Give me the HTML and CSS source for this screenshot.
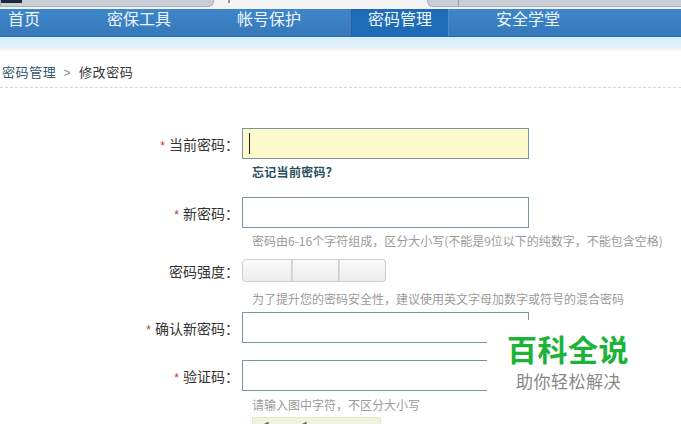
FILE: index.html
```html
<!DOCTYPE html>
<html lang="zh-CN">
<head>
<meta charset="utf-8">
<title>修改密码</title>
<link rel="stylesheet" href="styles.css">
</head>
<body>
<div class="topstrip">
  <div class="tab-left"><span class="tab-dark"></span></div>
  <span class="tick"></span>
  <div class="tab-right"><span class="tab-sep"></span></div>
</div>
<nav class="nav">
  <a class="nav-item first">首页</a>
  <a class="nav-item">密保工具</a>
  <a class="nav-item">帐号保护</a>
  <a class="nav-item active">密码管理</a>
  <a class="nav-item">安全学堂</a>
</nav>
<div class="band"></div>
<div class="crumb"><span class="crumb-link">密码管理</span><span class="crumb-sep">&gt;</span><span class="crumb-cur">修改密码</span></div>
<main class="form">
  <div class="row">
    <label class="label"><span class="req">*</span>当前密码：</label>
    <div class="field current"><span class="caret"></span></div>
  </div>
  <div class="sub link-row"><a class="forgot">忘记当前密码？</a></div>
  <div class="row gap-lg">
    <label class="label"><span class="req">*</span>新密码：</label>
    <div class="field"></div>
  </div>
  <div class="sub hint">密码由6-16个字符组成，区分大小写(不能是9位以下的纯数字，不能包含空格)</div>
  <div class="row strength-row">
    <label class="label">密码强度：</label>
    <div class="strength"><span class="seg"></span><span class="seg"></span><span class="seg"></span></div>
  </div>
  <div class="sub hint hint2">为了提升您的密码安全性，建议使用英文字母加数字或符号的混合密码</div>
  <div class="row gap-sm">
    <label class="label"><span class="req">*</span>确认新密码：</label>
    <div class="field"></div>
  </div>
  <div class="row gap-lg">
    <label class="label"><span class="req">*</span>验证码：</label>
    <div class="field"></div>
  </div>
  <div class="sub hint hint3">请输入图中字符，不区分大小写</div>
  <div class="sub captcha-row"><div class="captcha"><span class="mark m1"></span><span class="mark m2"></span></div></div>
</main>
<div class="watermark">
  <div class="wm-title">百科全说</div>
  <div class="wm-sub">助你轻松解决</div>
</div>
</body>
</html>
```
FILE: styles.css
```css
* { box-sizing: border-box; }
html, body { margin: 0; padding: 0; background: #fff; overflow: hidden; }
body {
  width: 681px; height: 424px; position: relative;
  font-family: "SimSun", "Noto Sans CJK SC", "Liberation Sans", sans-serif;
  color: #333;
}
.topstrip {
  height: 9px; background: #f3f3f3; display: flex; align-items: flex-start;
}
.tab-left {
  width: 214px; height: 7px; background: #c9ced6; border: 1px solid #a9b0ba; border-top: 0;
  border-radius: 0 0 6px 0; position: relative;
}
.tab-dark { position: absolute; left: 0; top: 0; width: 21px; height: 3px; background: #1d2a3c; }
.tick { width: 2px; height: 3px; background: #9a9a9a; margin-left: 14px; }
.tab-right {
  margin-left: 197px; flex: 1; height: 7px; background: #c9ced6; border: 1px solid #a9b0ba;
  border-top: 0; border-right: 0; border-radius: 0 0 0 6px; position: relative;
}
.tab-sep { position: absolute; left: 30px; top: 0; width: 1px; height: 7px; background: #99a0aa; }

.nav {
  height: 28px; display: flex; background: linear-gradient(#3c86c9, #3779bb);
  border-bottom: 1px solid #2d69a6;
}
.nav-item {
  width: 130px; color: #eef6ff; font-size: 16px; line-height: 18px; padding-top: 0;
  padding-left: 107px; white-space: nowrap;
}
.nav-item.first { width: 107px; padding-left: 8px; }
.nav-item:nth-child(2) { width: 130px; padding-left: 0; }
.nav-item:nth-child(3) { width: 114px; padding-left: 0; }
.nav-item.active {
  width: 98px; padding-left: 16px; background: #1f6cb6;
  border-left: 1px solid #2a5f99; border-right: 1px solid #4a8ccc;
}
.nav-item:nth-child(5) { padding-left: 47px; width: auto; }

.band { height: 15px; background: linear-gradient(#d3eefa, #e3f1fb 60%, #f3f6f8 85%, #fff); }

.crumb {
  height: 36px; padding-top: 12px; font-size: 13px; line-height: 16px; padding-left: 2px;
  border-bottom: 1px dashed #d6d6d6; letter-spacing: 0.6px;
}
.crumb-link { color: #2f5868; }
.crumb-sep { color: #888; margin: 0 8px 0 7px; font-family: "Liberation Sans", sans-serif; font-size: 12px; }
.crumb-cur { color: #333; }

.form { padding-top: 40px; display: flex; flex-direction: column; }
.row { display: flex; align-items: center; }
.label {
  width: 242px; text-align: right; padding-right: 3px; font-size: 14px; color: #333; white-space: nowrap;
}
.req { color: #c0392b; font-size: 12px; margin-right: 4px; font-family: "Liberation Sans", sans-serif; }
.field {
  width: 287px; height: 31px; border: 1px solid #7895a0; background: #fff; position: relative;
}
.field.current { background: #fef9cd; }
.caret { position: absolute; left: 6px; top: 4px; width: 1px; height: 21px; background: #222; }

.sub { padding-left: 252px; font-size: 12px; line-height: 16px; }
.link-row { margin-top: 5px; }
.forgot { color: #2b4f60; font-weight: bold; letter-spacing: 0.3px; }
.gap-lg { margin-top: 17px; }
.gap-sm { margin-top: 5px; }
.hint { color: #9a9a9a; margin-top: 5px; white-space: nowrap; }
.hint2 { margin-top: 9px; }
.hint3 { margin-top: 6px; }

.strength-row { margin-top: 10px; }
.strength { display: flex; height: 23px; }
.seg {
  width: 47px; height: 23px; border: 1px solid #cfcfcf; background: linear-gradient(#fafafa, #ececec);
}
.seg + .seg { border-left: 1px solid #d8d8d8; }
.seg:first-child { width: 50px; border-radius: 4px 0 0 4px; }
.seg:last-child { width: 47px; border-radius: 0 4px 4px 0; }

.captcha-row { margin-top: 4px; }
.captcha { width: 129px; height: 30px; background: #eef4e0; border: 1px solid #e3ead3; position: relative; }
.mark { position: absolute; top: 5px; width: 6px; height: 2px; background: #6a6a5a; transform: rotate(-30deg); }
.m1 { left: 10px; }
.m2 { left: 48px; }

.watermark {
  position: absolute; left: 487px; top: 320px; width: 160px; height: 76px; background: #fff;
  padding-top: 7px;
}
.wm-title {
  color: #1db23a; font-size: 30px; font-weight: bold; line-height: 42px; padding-left: 20px;
  font-family: "Noto Sans CJK SC", sans-serif; letter-spacing: 0.5px;
}
.wm-sub {
  color: #888; font-size: 17px; line-height: 24px; padding-left: 29px;
  font-family: "Noto Sans CJK SC", sans-serif; letter-spacing: 0.5px;
}
```
